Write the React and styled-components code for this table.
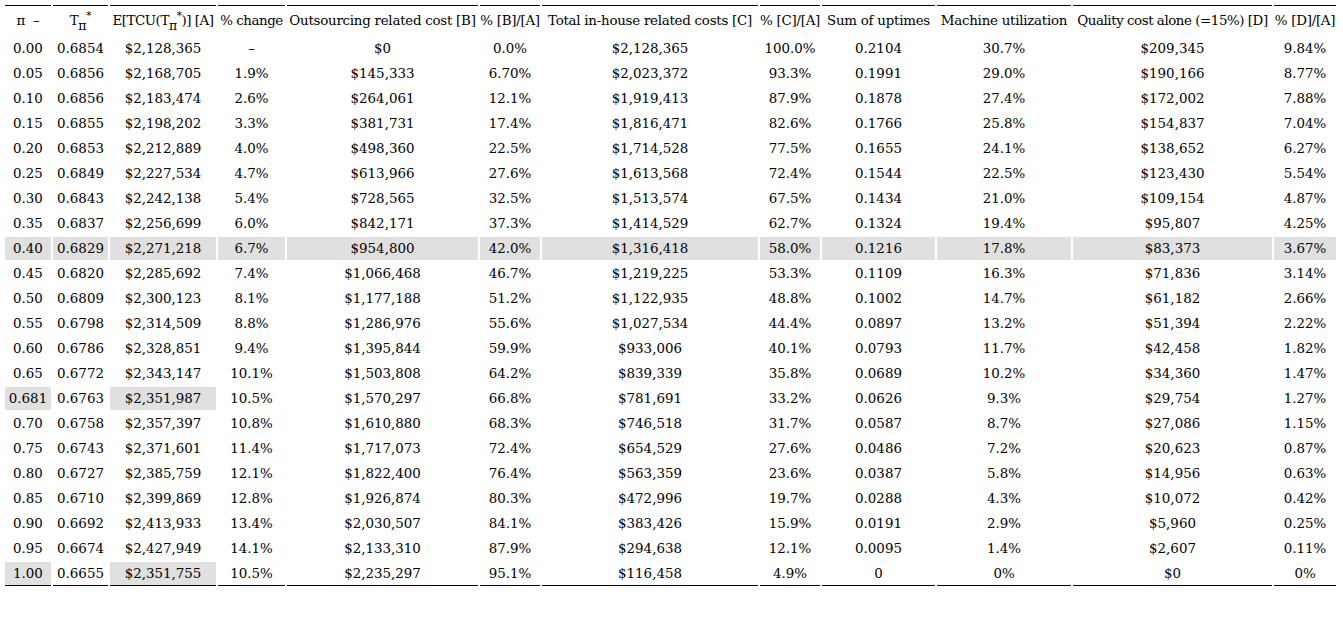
import React from "react";
import styled, { createGlobalStyle } from "styled-components";

const Global = createGlobalStyle`
  html, body { margin: 0; padding: 0; background: #ffffff; }
  body { font-family: "DejaVu Serif", "Liberation Serif", serif; color: #000; }
`;

const Page = styled.div`
  padding: 3px 0 0 3px;
`;

const Table = styled.table`
  table-layout: fixed;
  width: 1335px;
  border-collapse: separate;
  border-spacing: 2px;
  font-size: 13.4px;
  font-family: "DejaVu Serif", "Liberation Serif", serif;
`;

const Th = styled.th`
  font-weight: normal;
  border-top: 1px solid #000;
  height: 29px;
  padding: 0;
  text-align: center;
  vertical-align: middle;
  white-space: nowrap;
  overflow: visible;
  letter-spacing: ${(p) => (p.$tight ? "-0.45px" : "-0.25px")};
`;

const Td = styled.td`
  height: 23px;
  padding: 0;
  text-align: center;
  vertical-align: middle;
  white-space: nowrap;
  background: ${(p) => (p.$hl ? "#e0e0e0" : "transparent")};
  border-bottom: ${(p) => (p.$last ? "1px solid #000" : "none")};
`;

const Sub = styled.span`
  font-size: 12.5px;
  vertical-align: -5px;
  line-height: 0;
`;

const Sup = styled.span`
  font-size: 10.5px;
  vertical-align: 6px;
  line-height: 0;
`;

const widths = [46, 55, 106, 67, 191, 60, 216, 60, 113, 134, 199, 62];

const headers = [
  <>π&nbsp;&nbsp;–</>,
  <>T<Sub>π</Sub><Sup>*</Sup></>,
  <>E[TCU(T<Sub>π</Sub><Sup>*</Sup>)] [A]</>,
  "% change",
  "Outsourcing related cost [B]",
  "% [B]/[A]",
  "Total in-house related costs [C]",
  "% [C]/[A]",
  "Sum of uptimes",
  "Machine utilization",
  "Quality cost alone (=15%) [D]",
  "% [D]/[A]",
];

const tightHeaders = [2, 3, 10];

const rows = [
  ["0.00", "0.6854", "$2,128,365", "–", "$0", "0.0%", "$2,128,365", "100.0%", "0.2104", "30.7%", "$209,345", "9.84%"],
  ["0.05", "0.6856", "$2,168,705", "1.9%", "$145,333", "6.70%", "$2,023,372", "93.3%", "0.1991", "29.0%", "$190,166", "8.77%"],
  ["0.10", "0.6856", "$2,183,474", "2.6%", "$264,061", "12.1%", "$1,919,413", "87.9%", "0.1878", "27.4%", "$172,002", "7.88%"],
  ["0.15", "0.6855", "$2,198,202", "3.3%", "$381,731", "17.4%", "$1,816,471", "82.6%", "0.1766", "25.8%", "$154,837", "7.04%"],
  ["0.20", "0.6853", "$2,212,889", "4.0%", "$498,360", "22.5%", "$1,714,528", "77.5%", "0.1655", "24.1%", "$138,652", "6.27%"],
  ["0.25", "0.6849", "$2,227,534", "4.7%", "$613,966", "27.6%", "$1,613,568", "72.4%", "0.1544", "22.5%", "$123,430", "5.54%"],
  ["0.30", "0.6843", "$2,242,138", "5.4%", "$728,565", "32.5%", "$1,513,574", "67.5%", "0.1434", "21.0%", "$109,154", "4.87%"],
  ["0.35", "0.6837", "$2,256,699", "6.0%", "$842,171", "37.3%", "$1,414,529", "62.7%", "0.1324", "19.4%", "$95,807", "4.25%"],
  ["0.40", "0.6829", "$2,271,218", "6.7%", "$954,800", "42.0%", "$1,316,418", "58.0%", "0.1216", "17.8%", "$83,373", "3.67%"],
  ["0.45", "0.6820", "$2,285,692", "7.4%", "$1,066,468", "46.7%", "$1,219,225", "53.3%", "0.1109", "16.3%", "$71,836", "3.14%"],
  ["0.50", "0.6809", "$2,300,123", "8.1%", "$1,177,188", "51.2%", "$1,122,935", "48.8%", "0.1002", "14.7%", "$61,182", "2.66%"],
  ["0.55", "0.6798", "$2,314,509", "8.8%", "$1,286,976", "55.6%", "$1,027,534", "44.4%", "0.0897", "13.2%", "$51,394", "2.22%"],
  ["0.60", "0.6786", "$2,328,851", "9.4%", "$1,395,844", "59.9%", "$933,006", "40.1%", "0.0793", "11.7%", "$42,458", "1.82%"],
  ["0.65", "0.6772", "$2,343,147", "10.1%", "$1,503,808", "64.2%", "$839,339", "35.8%", "0.0689", "10.2%", "$34,360", "1.47%"],
  ["0.681", "0.6763", "$2,351,987", "10.5%", "$1,570,297", "66.8%", "$781,691", "33.2%", "0.0626", "9.3%", "$29,754", "1.27%"],
  ["0.70", "0.6758", "$2,357,397", "10.8%", "$1,610,880", "68.3%", "$746,518", "31.7%", "0.0587", "8.7%", "$27,086", "1.15%"],
  ["0.75", "0.6743", "$2,371,601", "11.4%", "$1,717,073", "72.4%", "$654,529", "27.6%", "0.0486", "7.2%", "$20,623", "0.87%"],
  ["0.80", "0.6727", "$2,385,759", "12.1%", "$1,822,400", "76.4%", "$563,359", "23.6%", "0.0387", "5.8%", "$14,956", "0.63%"],
  ["0.85", "0.6710", "$2,399,869", "12.8%", "$1,926,874", "80.3%", "$472,996", "19.7%", "0.0288", "4.3%", "$10,072", "0.42%"],
  ["0.90", "0.6692", "$2,413,933", "13.4%", "$2,030,507", "84.1%", "$383,426", "15.9%", "0.0191", "2.9%", "$5,960", "0.25%"],
  ["0.95", "0.6674", "$2,427,949", "14.1%", "$2,133,310", "87.9%", "$294,638", "12.1%", "0.0095", "1.4%", "$2,607", "0.11%"],
  ["1.00", "0.6655", "$2,351,755", "10.5%", "$2,235,297", "95.1%", "$116,458", "4.9%", "0", "0%", "$0", "0%"],
];

const isHighlighted = (ri, ci) => {
  const key = rows[ri][0];
  if (key === "0.40") return true;
  if ((key === "0.681" || key === "1.00") && (ci === 0 || ci === 2)) return true;
  return false;
};

export default function App() {
  return (
    <Page>
      <Global />
      <Table>
        <colgroup>
          {widths.map((w, i) => (
            <col key={i} style={{ width: w }} />
          ))}
        </colgroup>
        <thead>
          <tr>
            {headers.map((h, i) => (
              <Th key={i} $tight={tightHeaders.includes(i)}>
                {h}
              </Th>
            ))}
          </tr>
        </thead>
        <tbody>
          {rows.map((r, ri) => (
            <tr key={ri}>
              {r.map((c, ci) => (
                <Td key={ci} $hl={isHighlighted(ri, ci)} $last={ri === rows.length - 1}>
                  {c}
                </Td>
              ))}
            </tr>
          ))}
        </tbody>
      </Table>
    </Page>
  );
}
